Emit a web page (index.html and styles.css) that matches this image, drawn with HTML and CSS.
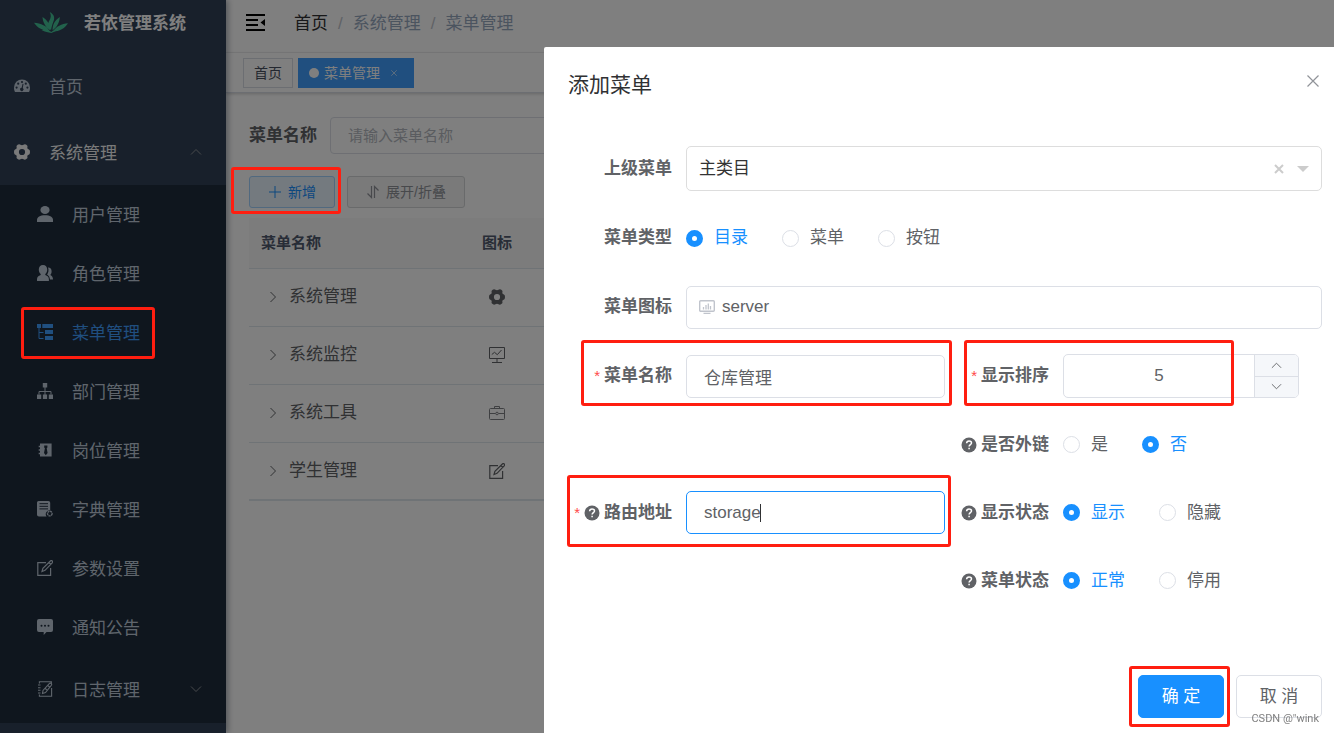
FILE: index.html
```html
<!DOCTYPE html>
<html lang="zh-CN">
<head>
<meta charset="utf-8">
<title>若依管理系统</title>
<link rel="stylesheet" href="styles.css">
</head>
<body>
<svg class="sprite" aria-hidden="true">
  <symbol id="i-dashboard" viewBox="0 0 16 16"><path fill="currentColor" d="M0 9.500a8 8 0 0 1 16 0c0 1.700-.3 3.400-1 4.500H1C.3 12.900 0 11.200 0 9.500z"/><g class="hole"><circle cx="2.600" cy="9.600" r="1.100"/><circle cx="4.200" cy="5.700" r="1.100"/><circle cx="8" cy="4" r="1.100"/><circle cx="11.800" cy="5.700" r="1.100"/><circle cx="13.400" cy="9.600" r="1.100"/><path d="M8.600 5.800l.9.200-.7 4a1.700 1.700 0 1 1-1.200-.3z"/></g></symbol>
  <symbol id="i-gear" viewBox="0 0 16 16"><path fill="currentColor" fill-rule="evenodd" d="M5 .3c1-.2 1.700 1 3 1S10 .1 11 .3c1 .3 1.800.8 2.300 1.400.5.900-.3 1.800.2 2.700.5.900 1.600.8 2.100 1.700.5 1 .5 2.800 0 3.800-.5.900-1.600.8-2.100 1.700-.5.900.3 1.800-.2 2.700-.5.600-1.300 1.100-2.300 1.400-1 .2-1.700-1-3-1s-2 1.200-3 1c-1-.3-1.800-.8-2.300-1.400-.5-.9.300-1.800-.2-2.700C2 10.700.9 10.800.4 9.900c-.5-1-.5-2.800 0-3.800.5-.9 1.600-.8 2.100-1.700.5-.9-.3-1.800.2-2.700C3.200 1.100 4 .6 5 .3zM8 4.900a3.100 3.100 0 1 0 0 6.200 3.100 3.100 0 0 0 0-6.200z"/></symbol>
  <symbol id="i-user" viewBox="0 0 16 16"><ellipse cx="8" cy="4" rx="4.600" ry="4" fill="currentColor"/><path fill="currentColor" d="M0 16v-2c0-3 3-4.700 8-4.700s8 1.700 8 4.700v2z"/></symbol>
  <symbol id="i-peoples" viewBox="0 0 16 16"><path fill="currentColor" d="M6 0c2.600 0 4.200 1.900 4.200 4.500 0 2-.8 3.500-1.900 4.500v1c2.200.7 3.600 2.200 3.600 4.300V16H0v-1.700C0 12.200 1.500 10.700 3.700 10V9C2.600 8 1.800 6.500 1.800 4.500 1.800 1.900 3.400 0 6 0z"/><path fill="currentColor" d="M11 2.600c2.200-.1 3.700 1.500 3.600 3.900 0 1.500-.5 2.700-1.300 3.600 1.700.9 2.700 2.200 2.700 4.500h-3c-.2-2.300-1.200-4-2.900-5 1.400-1.800 1.900-4.600.9-7z"/></symbol>
  <symbol id="i-tree" viewBox="0 0 16 16"><path fill="currentColor" d="M0 0h4v4H0zM5.300 0H16v4H5.300zM8 6h8v4H8zM8 12h8v4H8z"/><path fill="none" stroke="currentColor" d="M2 4v10.500h4.500M2 8.500h4.500"/></symbol>
  <symbol id="i-dept" viewBox="0 0 16 16"><path fill="currentColor" d="M5.800 0h4.400v4.400H5.800zM0 11.400h4.200V16H0zM5.900 11.400h4.200V16H5.900zM11.800 11.400H16V16h-4.200z"/><path fill="none" stroke="currentColor" d="M8 4v8M2 11.500v-3h12v3"/></symbol>
  <symbol id="i-post" viewBox="0 0 16 16"><path fill="currentColor" d="M3 1.500h11.600v13H3z"/><path stroke="currentColor" stroke-width="1.400" d="M1.700 4.500H4M1.700 8H4M1.700 11.500H4"/><path class="hole" d="M7.200 3.500h3.200v1.900l-.7.900.9 4.800-1.800 2.200L7 11.100l.9-4.800-.7-.9z"/></symbol>
  <symbol id="i-dict" viewBox="0 0 16 16"><path fill="currentColor" d="M1.600 0h9.800q1.800 0 1.800 1.800v7.400a4 4 0 0 0-3.600 6.400H2Q0 15.600 0 13.800V1.600Q0 0 1.600 0z"/><path class="cut" d="M2.500 2.700h8.500M2.500 5.300h8.500M2.500 7.900h8.500"/><circle cx="12.800" cy="12.600" r="2.300" fill="none" stroke="currentColor" stroke-width="1.400" stroke-dasharray="2 .5"/></symbol>
  <symbol id="i-edit" viewBox="0 0 16 16"><path fill="none" stroke="currentColor" stroke-width="1.200" d="M9 2.600H.8v12.700h12.800V8M13.600.8a1.300 1.300 0 0 1 1.800 1.800L8 10.300l-3 1.200.9-3.200zM12 2.600l1.800 1.700"/></symbol>
  <symbol id="i-message" viewBox="0 0 16 16"><path fill="currentColor" d="M2 0h12q2 0 2 2v9q0 2-2 2H9.500L6.700 16v-3H2q-2 0-2-2V2Q0 0 2 0z"/><g class="hole"><circle cx="4.500" cy="6.700" r="1"/><circle cx="8" cy="6.700" r="1"/><circle cx="11.500" cy="6.700" r="1"/></g></symbol>
  <symbol id="i-log" viewBox="0 0 16 16"><path fill="none" stroke="currentColor" stroke-width="1.100" d="M2.400 2.500V.7h12v2M2.400 13.500v1.800h12.200V7M1 4h2.500M1 6.700h2.500M1 9.300h2.500M1 12h2.500M12.300 2.600a1.200 1.200 0 0 1 2 1.800L8.500 11.500l-3 1 .5-3zM10.800 4.500l1.900 1.600M8.300 7.500l1.500 1.300"/></symbol>
  <symbol id="i-monitor" viewBox="0 0 16 16"><path fill="none" stroke="currentColor" d="M.5.500h15v11H.5zM8 11.500V15M3 15.500h10M2.800 7.500l2.700-2.200 2.800 2.400L12.500 3"/></symbol>
  <symbol id="i-tool" viewBox="0 0 16 16"><g opacity=".8"><rect x=".5" y="3.500" width="15" height="11" rx="1" fill="none" stroke="currentColor"/><path fill="none" stroke="currentColor" d="M5.500 3.500v-2h5v2M.5 8.500h6M9.500 8.500h6"/><circle cx="8" cy="8.500" r="1.300" fill="none" stroke="currentColor"/></g></symbol>
  <symbol id="i-server" viewBox="0 0 16 16"><rect x=".7" y="1.700" width="14.600" height="10.600" rx="1" fill="none" stroke="currentColor" stroke-width="1.400"/><path fill="none" stroke="currentColor" stroke-width="1.300" d="M4.500 10.500V8M7 10.500V6M9.300 10.500V4.500M11.500 10.500V7M4.500 14.300h7"/></symbol>
  <symbol id="i-chevron" viewBox="0 0 12 12"><path fill="none" stroke="currentColor" d="M1 3.500l5 5 5-5"/></symbol>
  <symbol id="i-close" viewBox="0 0 12 12"><path fill="none" stroke="currentColor" stroke-width="1.200" d="M.5.500l11 11M11.500.5l-11 11"/></symbol>
  <symbol id="i-help" viewBox="0 0 16 16"><circle cx="8" cy="8" r="7.500" fill="currentColor"/><path fill="none" stroke="#fff" stroke-width="1.500" d="M5.600 6.200C5.700 4.600 6.700 3.900 8 3.900s2.500.8 2.500 2.100c0 1.500-2.400 1.700-2.400 3.500M8.100 10.700v1.600"/></symbol>
</svg>

<div class="app">
  <aside class="sidebar">
    <a class="logo" href="#">
      <svg class="logo-mark" viewBox="102 35 104 64" aria-hidden="true"><path d="M154 91c-11-15-10-23-4-32 4-7 5-14 0-24 15 8 16 19 11 30-3 8-5 15-7 26zM151 91c-13-10-22-24-23-41 15 9 23 22 23 41zM159 91c-1-18 8-32 22-41-1 17-9 31-22 41zM150 94c-19-1-38-10-48-26 21 1 40 10 48 26zM160 94c9-15 27-23 46-25-10 16-26 25-46 25zM155 99c-10-3-19-2-30-9 13 0 23 0 30 6 7-7 16-6 28-8-9 7-18 6-28 11z"/></svg>
      <span>若依管理系统</span>
    </a>
    <nav class="menu">
      <a class="item" href="#"><svg class="icon"><use href="#i-dashboard"/></svg><span>首页</span></a>
      <a class="item open" href="#"><svg class="icon"><use href="#i-gear"/></svg><span>系统管理</span><svg class="arrow up"><use href="#i-chevron"/></svg></a>
      <div class="submenu">
        <a class="sub" href="#"><svg class="icon"><use href="#i-user"/></svg><span>用户管理</span></a>
        <a class="sub" href="#"><svg class="icon"><use href="#i-peoples"/></svg><span>角色管理</span></a>
        <a class="sub active" href="#"><svg class="icon"><use href="#i-tree"/></svg><span>菜单管理</span></a>
        <a class="sub" href="#"><svg class="icon"><use href="#i-dept"/></svg><span>部门管理</span></a>
        <a class="sub" href="#"><svg class="icon"><use href="#i-post"/></svg><span>岗位管理</span></a>
        <a class="sub" href="#"><svg class="icon"><use href="#i-dict"/></svg><span>字典管理</span></a>
        <a class="sub" href="#"><svg class="icon"><use href="#i-edit"/></svg><span>参数设置</span></a>
        <a class="sub" href="#"><svg class="icon"><use href="#i-message"/></svg><span>通知公告</span></a>
        <a class="sub group" href="#"><svg class="icon"><use href="#i-log"/></svg><span>日志管理</span><svg class="arrow"><use href="#i-chevron"/></svg></a>
      </div>
    </nav>
  </aside>

  <div class="main">
    <header class="navbar">
      <button class="hamburger" type="button" aria-label="收起菜单"><svg viewBox="0 0 19 17"><path stroke="currentColor" stroke-width="2" d="M0 1h19M0 6h12M0 11h12M0 16h19"/><path fill="currentColor" d="M19 5v7l-4.500-3.500z"/></svg></button>
      <nav class="breadcrumb"><a href="#">首页</a><i>/</i><span>系统管理</span><i>/</i><span>菜单管理</span></nav>
    </header>
    <div class="tags">
      <a class="tag" href="#">首页</a>
      <a class="tag current" href="#"><b class="dot"></b>菜单管理<svg class="tag-close"><use href="#i-close"/></svg></a>
    </div>
    <main class="content">
      <form class="search">
        <label for="q">菜单名称</label>
        <input id="q" type="text" placeholder="请输入菜单名称">
      </form>
      <div class="toolbar">
        <button class="btn primary" type="button"><svg viewBox="0 0 14 14"><path stroke="currentColor" d="M7 1v12M1 7h12"/></svg>新增</button>
        <button class="btn info" type="button"><svg viewBox="0 0 14 14"><path fill="none" stroke="currentColor" stroke-width="1.200" d="M5.500 1v11.500L1.500 8.500M8.500 13V1.500l4 4"/></svg>展开/折叠</button>
      </div>
      <table class="grid">
        <thead><tr><th class="c-name">菜单名称</th><th class="c-icon">图标</th><th></th></tr></thead>
        <tbody>
          <tr><td><div class="cell"><svg class="expand"><use href="#i-chevron"/></svg>系统管理</div></td><td class="c-icon"><svg class="icon"><use href="#i-gear"/></svg></td><td></td></tr>
          <tr><td><div class="cell"><svg class="expand"><use href="#i-chevron"/></svg>系统监控</div></td><td class="c-icon"><svg class="icon"><use href="#i-monitor"/></svg></td><td></td></tr>
          <tr><td><div class="cell"><svg class="expand"><use href="#i-chevron"/></svg>系统工具</div></td><td class="c-icon"><svg class="icon"><use href="#i-tool"/></svg></td><td></td></tr>
          <tr><td><div class="cell"><svg class="expand"><use href="#i-chevron"/></svg>学生管理</div></td><td class="c-icon"><svg class="icon"><use href="#i-edit"/></svg></td><td></td></tr>
        </tbody>
      </table>
    </main>
  </div>
</div>

<div class="overlay">
  <section class="dialog" role="dialog" aria-labelledby="dlg-title">
    <header class="dialog-head">
      <h2 id="dlg-title">添加菜单</h2>
      <button class="dialog-close" type="button" aria-label="关闭"><svg><use href="#i-close"/></svg></button>
    </header>
    <form class="form">
      <div class="field wide">
        <label class="label" for="parent">上级菜单</label>
        <div class="control select-box">
          <select id="parent"><option>主类目</option></select>
          <button class="clear" type="button" aria-label="清空"><svg viewBox="0 0 10 10"><path stroke="currentColor" stroke-width="2" d="M1 1l8 8M9 1L1 9"/></svg></button>
          <svg class="caret-down" viewBox="0 0 12 6"><path fill="currentColor" d="M0 0h12L6 6z"/></svg>
        </div>
      </div>
      <div class="field wide" role="radiogroup" aria-labelledby="l-type">
        <span class="label" id="l-type">菜单类型</span>
        <div class="radios">
          <label><input type="radio" name="type" checked><span>目录</span></label>
          <label><input type="radio" name="type"><span>菜单</span></label>
          <label><input type="radio" name="type"><span>按钮</span></label>
        </div>
      </div>
      <div class="field wide">
        <label class="label" for="icon">菜单图标</label>
        <div class="control prefix-box"><svg class="icon"><use href="#i-server"/></svg><input id="icon" type="text" value="server"></div>
      </div>
      <div class="field">
        <label class="label required" for="name">菜单名称</label>
        <div class="control"><input id="name" type="text" value="仓库管理"></div>
      </div>
      <div class="field">
        <label class="label required" for="order">显示排序</label>
        <div class="control number">
          <input id="order" type="text" value="5">
          <div class="steps">
            <button type="button" aria-label="增加"><svg class="up"><use href="#i-chevron"/></svg></button>
            <button type="button" aria-label="减少"><svg><use href="#i-chevron"/></svg></button>
          </div>
        </div>
      </div>
      <div class="field right" role="radiogroup" aria-labelledby="l-link">
        <span class="label" id="l-link"><svg class="help"><use href="#i-help"/></svg>是否外链</span>
        <div class="radios">
          <label><input type="radio" name="link"><span>是</span></label>
          <label><input type="radio" name="link" checked><span>否</span></label>
        </div>
      </div>
      <div class="field">
        <label class="label required" for="path"><svg class="help"><use href="#i-help"/></svg>路由地址</label>
        <div class="control focused"><input id="path" type="text" value="storage"><i class="text-caret"></i></div>
      </div>
      <div class="field" role="radiogroup" aria-labelledby="l-show">
        <span class="label" id="l-show"><svg class="help"><use href="#i-help"/></svg>显示状态</span>
        <div class="radios">
          <label><input type="radio" name="show" checked><span>显示</span></label>
          <label><input type="radio" name="show"><span>隐藏</span></label>
        </div>
      </div>
      <div class="field right" role="radiogroup" aria-labelledby="l-state">
        <span class="label" id="l-state"><svg class="help"><use href="#i-help"/></svg>菜单状态</span>
        <div class="radios">
          <label><input type="radio" name="state" checked><span>正常</span></label>
          <label><input type="radio" name="state"><span>停用</span></label>
        </div>
      </div>
    </form>
    <footer class="dialog-foot">
      <button class="action confirm" type="button">确 定</button>
      <button class="action" type="button">取 消</button>
    </footer>
  </section>
</div>

<div class="marks">
  <i class="mark m-add"></i>
  <i class="mark m-menu"></i>
  <i class="mark m-name"></i>
  <i class="mark m-order"></i>
  <i class="mark m-path"></i>
  <i class="mark m-confirm"></i>
  <span class="watermark">CSDN @"wink</span>
</div>
</body>
</html>
```
FILE: styles.css
```css
* { box-sizing: border-box; }

body {
  margin: 0;
  font: 17px/24px "Liberation Sans", "Noto Sans CJK SC", sans-serif;
  color: #606266;
  background: #fff;
}

a { color: inherit; text-decoration: none; }
i { font-style: normal; }
button, input, select { font: inherit; color: inherit; margin: 0; }
button { cursor: pointer; padding: 0; border: 0; background: none; }
svg { flex: none; }
.sprite { position: absolute; width: 0; height: 0; }
.icon { display: block; width: 16px; height: 16px; }

/* shell */
.app { display: flex; height: 100vh; overflow: hidden; }

.sidebar {
  --bg: #304156;
  flex: none;
  width: 226px;
  background: var(--bg);
  color: #bfcbd9;
  box-shadow: 2px 0 6px rgba(0, 21, 41, .35);
  z-index: 1;
}
.hole { fill: var(--bg); }
.cut { stroke: var(--bg); }

.logo {
  display: flex;
  align-items: center;
  gap: 16px;
  height: 54px;
  padding: 0 0 10px 34px;
  color: #fff;
  font-weight: bold;
}
.logo-mark { width: 34px; height: 21px; fill: #45c498; }
.logo span, .item span, .sub span { padding-top: 4px; }

.item, .sub { display: flex; align-items: center; gap: 19px; padding: 0 24px 2px 14px; }
.item { height: 66px; }
.item.open { color: #f4f4f5; height: 65px; }
.submenu { --bg: #1f2d3d; background: var(--bg); }
.sub { height: 59px; padding-left: 37px; }
.sub.group { height: 66px; }
.sub.active { color: #409eff; }
.arrow { width: 12px; height: 12px; margin-left: auto; color: #909399; }
.up { transform: rotate(180deg); }

.main { flex: 1; min-width: 0; }

.navbar {
  display: flex;
  align-items: center;
  gap: 29px;
  height: 53px;
  padding: 0 20px 8px;
  border-bottom: 1px solid #f0f1f2;
}
.hamburger { width: 19px; height: 17px; color: #000; }
.hamburger svg { display: block; }
.breadcrumb { display: flex; padding-top: 4px; color: #97a8be; }
.breadcrumb a { color: #303133; }
.breadcrumb i { margin: 0 10px; color: #c0c4cc; }

.tags {
  display: flex;
  gap: 5px;
  height: 40px;
  padding: 5px 17px;
  border-bottom: 1px solid #d8dce5;
  box-shadow: 0 1px 3px rgba(0, 0, 0, .2);
}
.tag {
  display: flex;
  align-items: center;
  height: 30px;
  padding: 0 10px;
  border: 1px solid #d8dce5;
  font-size: 14px;
  color: #495060;
}
.tag.current { background: #409eff; border-color: #409eff; color: #fff; padding-right: 16px; }
.dot { width: 10px; height: 10px; margin-right: 5px; border-radius: 50%; background: #fff; }
.tag-close { width: 6px; height: 6px; margin-left: 11px; }

.content { padding: 24px 23px; }
.search { display: flex; align-items: center; gap: 13px; }
.search label { font-weight: bold; }
.search input {
  width: 258px;
  height: 37px;
  padding: 0 17px;
  border: 1px solid #dcdfe6;
  border-radius: 4px;
  font-size: 15px;
}
.search input::placeholder { color: #b4b8c0; }

.toolbar { display: flex; gap: 12px; margin: 22px 0 10px; }
.btn {
  display: flex;
  align-items: center;
  gap: 6px;
  height: 32px;
  padding: 0 18px;
  border: 1px solid;
  border-radius: 3px;
  font-size: 14px;
}
.btn svg { width: 14px; height: 14px; }
.btn.primary { color: #1890ff; background: #e8f4ff; border-color: #a3d3ff; }
.btn.info { color: #909399; background: #f4f4f5; border-color: #d3d4d6; }

.grid { width: 100%; border-collapse: collapse; table-layout: fixed; border-bottom: 2px solid #dfe6ec; }
.grid th { height: 50px; padding: 0 12px; background: #f8f8f9; color: #515a6e; font-size: 15px; text-align: left; }
.grid td { height: 58px; padding: 0 12px; }
.grid th, .grid td { border-bottom: 1px solid #dfe6ec; }
.grid .c-name { width: 200px; }
.grid .c-icon { width: 96px; text-align: center; }
.grid td .icon { margin: 0 auto; --bg: #fff; }
.cell { display: flex; align-items: center; gap: 10px; padding-left: 6px; }
.expand { width: 12px; height: 12px; transform: rotate(-90deg); }

/* dialog */
.overlay {
  position: fixed;
  inset: 0;
  z-index: 10;
  display: flex;
  padding: 47px 0 0 544px;
  background: rgba(0, 0, 0, .5);
  overflow: hidden;
}
.dialog { flex: 1; min-width: 0; background: #fff; border-radius: 2px 0 0; padding: 24px 12px 0 24px; }
.dialog-head { display: flex; justify-content: space-between; align-items: flex-start; }
.dialog-head h2 { margin: 0; font-size: 21px; line-height: 28px; font-weight: normal; color: #303133; }
.dialog-close { width: 18px; height: 20px; color: #909399; }
.dialog-close svg { display: block; width: 12px; height: 12px; margin: auto; }

.form {
  display: grid;
  grid-template-columns: 1fr 1fr;
  row-gap: 25px;
  margin-top: 47px;
}
.field { display: flex; align-items: center; min-height: 43px; }
.wide { grid-column: 1 / -1; min-height: 44px; }
.right { grid-column: 2; }
.label {
  display: flex;
  flex: none;
  justify-content: flex-end;
  align-items: center;
  width: 118px;
  padding-right: 14px;
  font-weight: bold;
  white-space: nowrap;
}
.required::before { content: "*"; margin-right: 4px; color: #ff4949; font-size: 15px; font-weight: normal; }
.help { width: 16px; height: 16px; margin-right: 4px; }

.control {
  position: relative;
  display: flex;
  align-items: center;
  flex: 1;
  min-width: 0;
  height: 43px;
  border: 1px solid #dcdfe6;
  border-radius: 5px;
  overflow: hidden;
}
.control input { flex: 1; min-width: 0; height: 100%; padding: 0 17px; border: 0; outline: 0; background: none; }
.focused { border-color: #1890ff; }
.text-caret { position: absolute; left: 73px; top: 12px; width: 1px; height: 18px; background: #303133; }

.select-box { height: 45px; border-color: #ddd; padding-right: 12px; color: #ccc; }
.select-box select { flex: 1; height: 100%; padding: 0 12px; border: 0; outline: 0; appearance: none; background: none; color: #333; }
.clear { width: 10px; height: 10px; margin-right: 13px; color: inherit; }
.clear svg { display: block; }
.caret-down { width: 12px; height: 6px; }

.prefix-box { padding-left: 12px; }
.prefix-box .icon { color: #c0c4cc; }
.prefix-box input { padding-left: 7px; }

.number { flex: 0 1 236px; height: 44px; }
.number input { padding: 0; text-align: center; }
.steps { display: flex; flex-direction: column; width: 44px; height: 100%; border-left: 1px solid #dcdfe6; background: #f5f7fa; }
.steps button { display: flex; flex: 1; align-items: center; justify-content: center; }
.steps button + button { border-top: 1px solid #dcdfe6; }
.steps svg { width: 11px; height: 11px; }

.radios { display: flex; gap: 34px; }
.radios label { display: flex; align-items: center; gap: 11px; }
.radios input {
  appearance: none;
  width: 17px;
  height: 17px;
  border: 1px solid #dcdfe6;
  border-radius: 50%;
  background: #fff;
}
.radios input:checked { border: 6px solid #1890ff; }
.radios input:checked + span { color: #1890ff; }

.dialog-foot { display: flex; justify-content: flex-end; gap: 12px; margin-top: 73px; }
.action { width: 86px; height: 43px; border: 1px solid #dcdfe6; border-radius: 5px; background: #fff; }
.confirm { border-color: #1890ff; background: #1890ff; color: #fff; }

/* callouts drawn over everything */
.marks { position: fixed; inset: 0; z-index: 20; pointer-events: none; }
.mark { position: absolute; border: 3px solid #ff1e10; border-radius: 3px; }
.m-add { left: 231px; top: 167px; width: 110px; height: 47px; }
.m-menu { left: 21px; top: 307px; width: 134px; height: 52px; }
.m-name { left: 581px; top: 340px; width: 371px; height: 66px; }
.m-order { left: 964px; top: 340px; width: 270px; height: 66px; }
.m-path { left: 567px; top: 475px; width: 384px; height: 72px; }
.m-confirm { left: 1129px; top: 666px; width: 101px; height: 61px; }
.watermark { position: absolute; right: 15px; bottom: 6px; font: 11px/16px Roboto, sans-serif; color: #808080; }
```
